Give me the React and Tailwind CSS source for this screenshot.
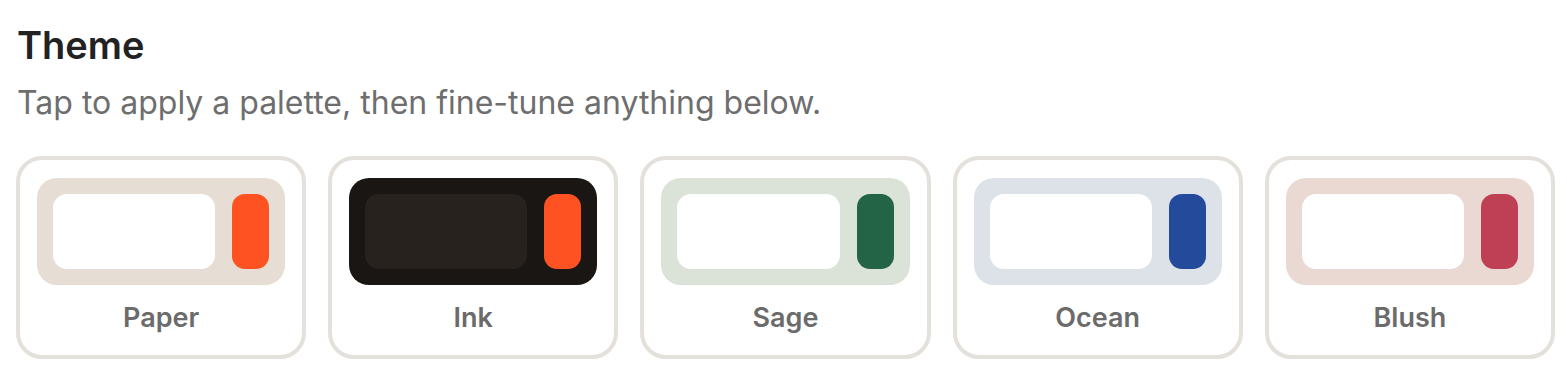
import React from "react";

const themes = [
  { name: "Paper", bg: "bg-[#e6ddd4]", card: "bg-white", accent: "bg-[#ff5222]" },
  { name: "Ink", bg: "bg-[#1a1613]", card: "bg-[#28221e]", accent: "bg-[#ff5222]" },
  { name: "Sage", bg: "bg-[#dbe2d8]", card: "bg-white", accent: "bg-[#236447]" },
  { name: "Ocean", bg: "bg-[#dde1e8]", card: "bg-white", accent: "bg-[#244b9b]" },
  { name: "Blush", bg: "bg-[#ead8d3]", card: "bg-white", accent: "bg-[#bf4055]" },
];

function ThemeCard({ t }) {
  return (
    <button className="flex flex-col items-stretch rounded-[26px] border-4 border-[#e4e0dc] bg-white px-[17px] pt-[18px] pb-[21px]">
      <div className={`flex h-[107px] gap-[17px] rounded-[20px] p-4 ${t.bg}`}>
        <div className={`flex-1 rounded-[14px] ${t.card}`} />
        <div className={`w-[37px] rounded-[13px] ${t.accent}`} />
      </div>
      <span className="mt-[17px] text-center text-[27px] font-semibold leading-8 text-[#6b6b6b]">
        {t.name}
      </span>
    </button>
  );
}

export default function App() {
  return (
    <div
      className="w-[1567px] h-[371px] bg-white pl-4 pr-3 pt-[22px]"
      style={{ fontFamily: "Inter, 'Noto Sans', sans-serif" }}
    >
      <h2 className="pl-[1px] text-[38px] font-semibold leading-[46px] text-[#222222]">Theme</h2>
      <p className="mt-[15px] pl-[1px] text-[32px] leading-[40px] text-[#6e6e6e]">
        Tap to apply a palette, then fine-tune anything below.
      </p>
      <div className="mt-[33px] grid grid-cols-5 gap-[22px]">
        {themes.map((t) => (
          <ThemeCard key={t.name} t={t} />
        ))}
      </div>
    </div>
  );
}
